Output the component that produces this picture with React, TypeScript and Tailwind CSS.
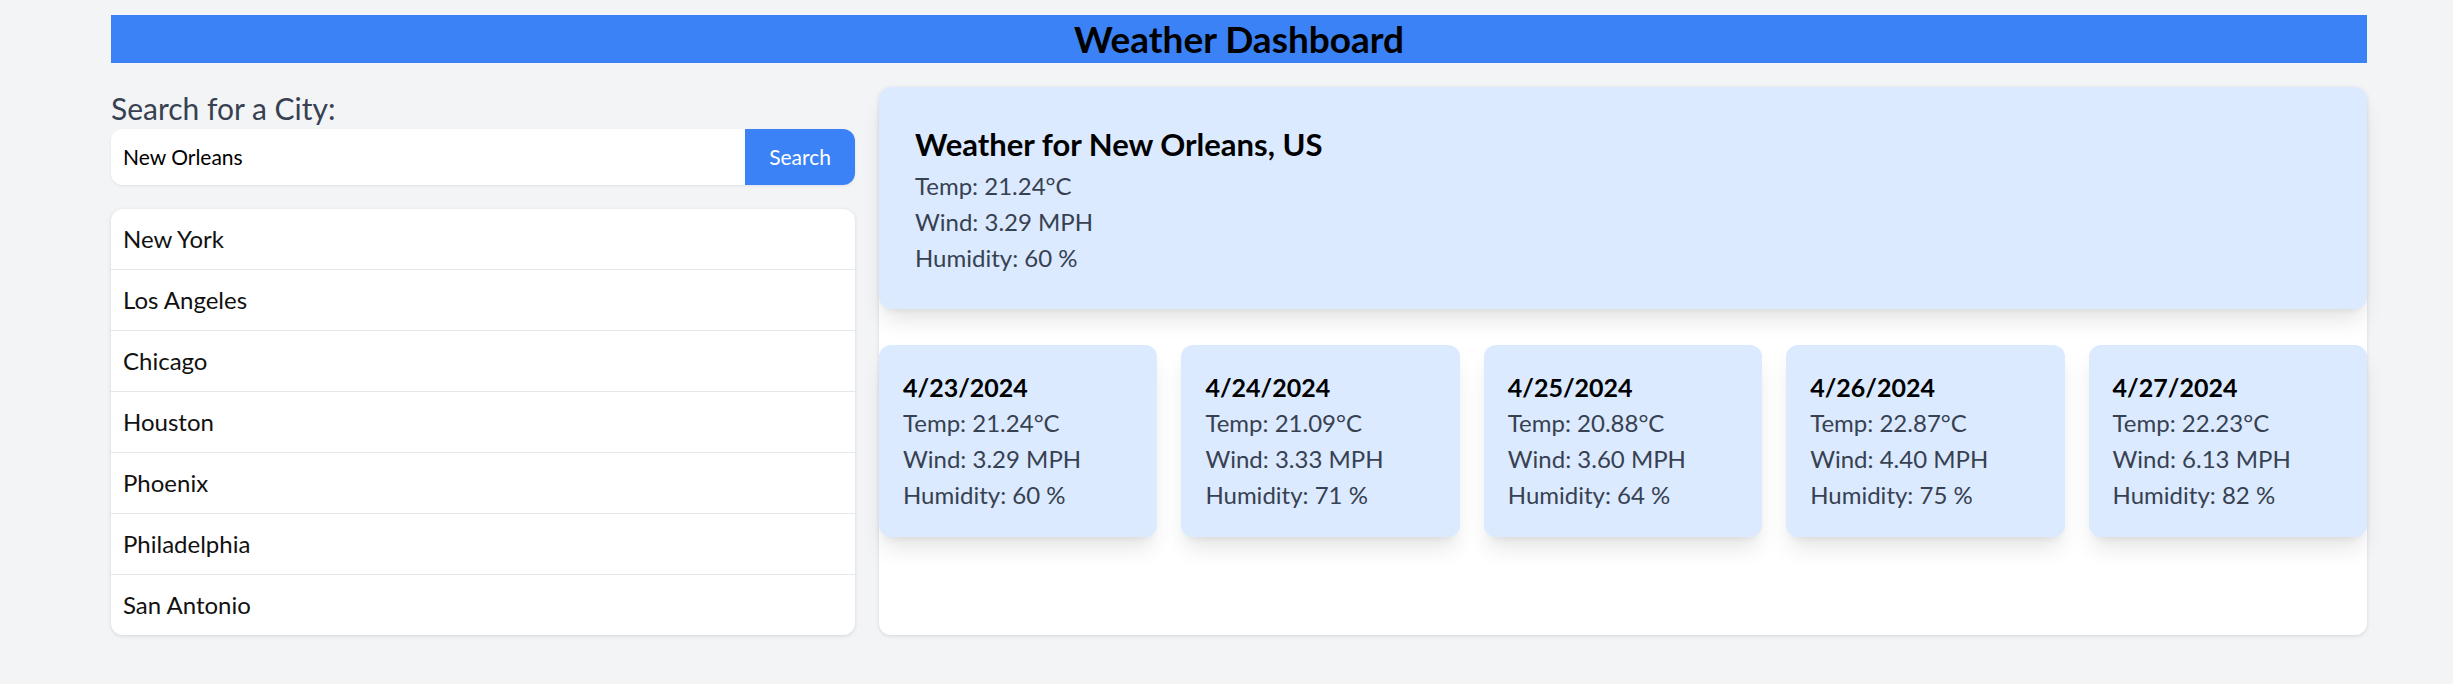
const cities = [
  "New York",
  "Los Angeles",
  "Chicago",
  "Houston",
  "Phoenix",
  "Philadelphia",
  "San Antonio",
];

const forecast = [
  { date: "4/23/2024", temp: "21.24", wind: "3.29", humidity: 60 },
  { date: "4/24/2024", temp: "21.09", wind: "3.33", humidity: 71 },
  { date: "4/25/2024", temp: "20.88", wind: "3.60", humidity: 64 },
  { date: "4/26/2024", temp: "22.87", wind: "4.40", humidity: 75 },
  { date: "4/27/2024", temp: "22.23", wind: "6.13", humidity: 82 },
];

export default function App() {
  return (
    <div className="min-h-screen bg-[#f3f4f6] font-['Lato',sans-serif]">
      <div className="ml-[111px] w-[2256px] pt-[15px]">
        {/* Header */}
        <header className="bg-[#3b82f6] h-[48px] text-center">
          <h1 className="text-[37px] leading-[48px] font-bold text-black">Weather Dashboard</h1>
        </header>

        <div className="mt-[24px] flex gap-[24px]">
          {/* Search + history */}
          <aside className="w-1/3">
            <label className="block text-[30px] leading-[42px] text-[#374151]">Search for a City:</label>
            <div className="flex h-[56px] bg-white rounded-[12px] overflow-hidden shadow-[0_1px_3px_rgba(0,0,0,0.08)]">
              <input
                defaultValue="New Orleans"
                className="flex-1 px-[12px] text-[21px] text-black outline-none bg-white"
              />
              <button className="bg-[#3b82f6] text-white px-[24px] text-[21px]">Search</button>
            </div>
            <ul className="mt-[24px] bg-white rounded-[12px] shadow-[0_1px_4px_rgba(0,0,0,0.12)]">
              {cities.map((city) => (
                <li
                  key={city}
                  className="px-[12px] py-[12px] text-[24px] leading-[36px] text-[#111] border-b border-[#e5e7eb] last:border-b-0"
                >
                  {city}
                </li>
              ))}
            </ul>
          </aside>

          {/* Weather */}
          <main className="w-2/3 bg-white rounded-[12px] shadow-[0_1px_4px_rgba(0,0,0,0.12)]">
            <section className="bg-[#dbeafe] rounded-[12px] pt-[36px] px-[36px] pb-[33px] shadow-[0_15px_22px_-4px_rgba(0,0,0,0.1),0_6px_9px_-6px_rgba(0,0,0,0.1)]">
              <h2 className="text-[31px] leading-[42px] mb-[3px] font-bold text-black">Weather for New Orleans, US</h2>
              <p className="text-[24px] leading-[36px] text-[#374151]">Temp: 21.24°C</p>
              <p className="text-[24px] leading-[36px] text-[#374151]">Wind: 3.29 MPH</p>
              <p className="text-[24px] leading-[36px] text-[#374151]">Humidity: 60 %</p>
            </section>

            <div className="mt-[36px] grid grid-cols-5 gap-[24px]">
              {forecast.map((day) => (
                <div
                  key={day.date}
                  className="bg-[#dbeafe] rounded-[12px] p-[24px] shadow-[0_15px_22px_-4px_rgba(0,0,0,0.1),0_6px_9px_-6px_rgba(0,0,0,0.1)]"
                >
                  <h3 className="text-[25px] leading-[36px] font-bold text-black">{day.date}</h3>
                  <p className="text-[24px] leading-[36px] text-[#374151]">Temp: {day.temp}°C</p>
                  <p className="text-[24px] leading-[36px] text-[#374151]">Wind: {day.wind} MPH</p>
                  <p className="text-[24px] leading-[36px] text-[#374151]">Humidity: {day.humidity} %</p>
                </div>
              ))}
            </div>
          </main>
        </div>
      </div>
    </div>
  );
}
